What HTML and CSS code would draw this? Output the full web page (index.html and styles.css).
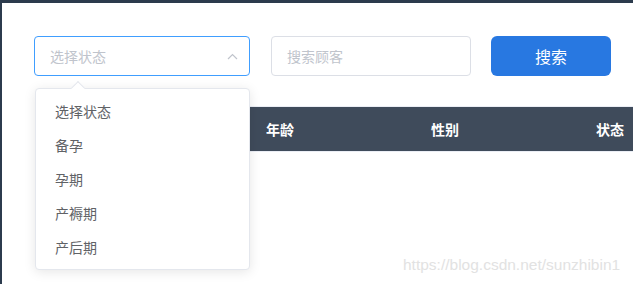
FILE: index.html
```html
<!doctype html>
<html>

<head>
	<title>顾客列表</title>
	<link rel="stylesheet" href="styles.css">
</head>

<body>
	<div class="page">
		<!-- filter bar -->
		<div class="filter-bar">
			<div class="select-wrap">
				<div class="select is-open">
					<span class="placeholder">选择状态</span>
					<svg class="chevron" width="11" height="7" viewBox="0 0 11 7"><path d="M1 6 L5.5 1.5 L10 6" fill="none" stroke="#c0c4cc" stroke-width="1.2"/></svg>
				</div>
				<div class="dropdown">
					<div class="dropdown-arrow"></div>
					<ul class="dropdown-list">
						<li>选择状态</li>
						<li>备孕</li>
						<li>孕期</li>
						<li>产褥期</li>
						<li>产后期</li>
					</ul>
				</div>
			</div>
			<input type="text" class="search-input" placeholder="搜索顾客">
			<button class="btn btn-search">搜索</button>
		</div>

		<!-- table (first column hidden behind the open dropdown) -->
		<div class="table">
			<div class="table-head">
				<div class="cell cell-first"></div>
				<div class="cell">年龄</div>
				<div class="cell">性别</div>
				<div class="cell">状态</div>
			</div>
		</div>

		<div class="watermark">https://blog.csdn.net/sunzhibin1</div>
	</div>
</body>

</html>
```

FILE: styles.css
```css
* { margin: 0; padding: 0; box-sizing: border-box; }
body { width: 633px; height: 284px; overflow: hidden; background-color: #2c3b4d; font-family: "Microsoft YaHei", "Noto Sans CJK SC", "Liberation Sans", sans-serif; font-size: 14px; }
.page { position: relative; margin: 3px 0 0 2px; height: 281px; background-color: #fff; padding: 33px 0 0 32px; overflow: hidden; }
.filter-bar { display: flex; align-items: flex-start; }
.select-wrap { position: relative; width: 216px; }
.select { height: 40px; border: 1px solid #409eff; border-radius: 4px; display: flex; align-items: center; justify-content: space-between; padding: 0 11px 0 15px; }
.placeholder { color: #c0c4cc; font-size: 14px; }
.chevron { margin-top: 1px; }
.search-input { width: 200px; height: 40px; margin-left: 21px; border: 1px solid #dcdfe6; border-radius: 4px; padding: 0 15px; font-family: inherit; font-size: 14px; outline: none; }
.search-input::placeholder { color: #c0c4cc; }
.btn { cursor: pointer; border: none; font-family: inherit; }
.btn-search { width: 120px; height: 40px; margin-left: 20px; border-radius: 6px; background-color: #2878e1; color: #fff; font-size: 16px; }

.dropdown { position: absolute; top: 52px; left: 1px; width: 215px; z-index: 10; background-color: #fff; border: 1px solid #e4e7ed; border-radius: 4px; box-shadow: 0 2px 12px 0 rgba(0, 0, 0, 0.1); }
.dropdown-arrow { position: absolute; top: -6px; left: 37px; width: 10px; height: 10px; background-color: #fff; border-left: 1px solid #e4e7ed; border-top: 1px solid #e4e7ed; transform: rotate(45deg); }
.dropdown-list { list-style: none; padding: 5px 0; position: relative; }
.dropdown-list li { height: 34px; line-height: 34px; padding-left: 19px; color: #606266; font-size: 14px; }

.table { margin: 30px 0 0 3px; border-top: 1px solid #ebeef5; border-bottom: 1px solid #ebeef5; }
.table-head { display: flex; height: 44px; background-color: #3f4b5b; }
.cell { width: 165px; flex-shrink: 0; padding-left: 15px; line-height: 44px; color: #fff; font-weight: bold; font-size: 14px; }
.cell-first { width: 214px; }

.watermark { position: absolute; left: 401px; top: 253px; color: #e2e2e2; font-family: "Liberation Sans", Arial, sans-serif; font-size: 15.5px; }
```
